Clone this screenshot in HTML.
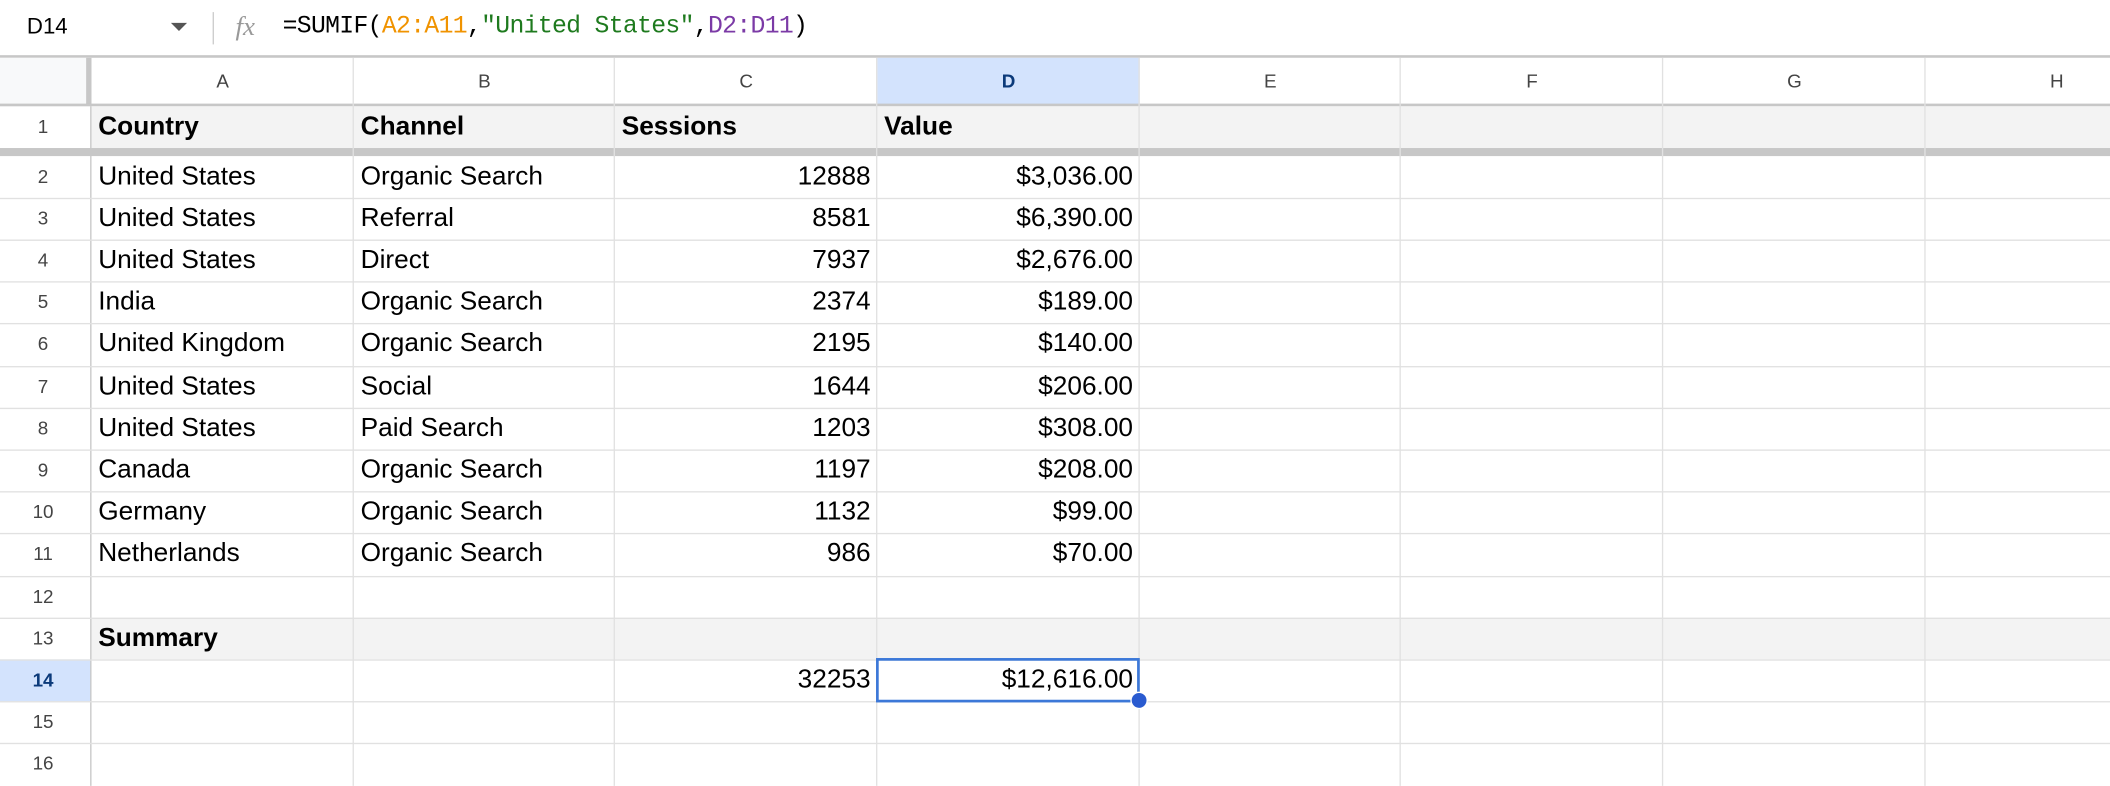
<!DOCTYPE html>
<html><head><meta charset="utf-8"><style>
html,body{margin:0;padding:0;width:2110px;height:784px;overflow:hidden;background:#fff}
#w{position:absolute;left:0;top:0;width:1568px;height:583px;transform:scale(1.34566);transform-origin:0 0;font-family:"Liberation Sans",Arial,sans-serif;color:#000}
.a{position:absolute}
.t{position:absolute;font-size:19.5px;line-height:31px;white-space:nowrap}
.r{text-align:right}
.h{position:absolute;font-size:14px;color:#444;text-align:center;line-height:36px;top:42px;height:36px}
.rn{position:absolute;left:0;width:64px;text-align:center;font-size:14px;color:#444;line-height:31px}
.vl{position:absolute;width:1px;background:#e1e1e1}
.hl{position:absolute;height:1px;background:#e1e1e1;left:0;width:1568px}
.mono{font-family:"Liberation Mono",monospace}
</style></head><body><div id="w">
<div class="a" style="left:20px;top:9px;font-size:16.5px;line-height:22px">D14</div>
<div class="a" style="left:127px;top:17px;width:0;height:0;border-left:6px solid transparent;border-right:6px solid transparent;border-top:6px solid #555"></div>
<div class="a" style="left:158px;top:9px;width:1px;height:24px;background:#ccc"></div>
<div class="a" style="left:175px;top:7px;font-family:'Liberation Serif',serif;font-style:italic;font-size:20px;color:#999;line-height:26px">fx</div>
<div class="a mono" style="left:210px;top:9px;font-size:18.4px;line-height:22px;letter-spacing:-0.5px">=SUMIF(<span style="color:#f09300">A2:A11</span>,<span style="color:#1e7a1e">"United States"</span>,<span style="color:#7b3aa6">D2:D11</span>)</div>
<div class="a" style="left:0;top:41px;width:1568px;height:2px;background:#c7c7c7"></div>
<div class="a" style="left:0;top:43px;width:1568px;height:35px;background:#fff"></div>
<div class="a" style="left:0;top:43px;width:64px;height:35px;background:#f8f9fa"></div>
<div class="a" style="left:652px;top:43px;width:195px;height:35px;background:#d3e3fd"></div>
<div class="a" style="left:64px;top:43px;width:4px;height:35px;background:#c7c7c7"></div>
<div class="h" style="left:68px;width:195px">A</div>
<div class="h" style="left:263px;width:194px">B</div>
<div class="h" style="left:457px;width:195px">C</div>
<div class="h" style="left:652px;width:195px;font-weight:bold;color:#0b3a7a">D</div>
<div class="h" style="left:847px;width:194px">E</div>
<div class="h" style="left:1041px;width:195px">F</div>
<div class="h" style="left:1236px;width:195px">G</div>
<div class="h" style="left:1431px;width:195px">H</div>
<div class="a" style="left:0;top:77px;width:1568px;height:2px;background:#c7c7c7"></div>
<div class="a" style="left:68px;top:79px;width:1500px;height:31px;background:#f3f3f3"></div>
<div class="a" style="left:0;top:110px;width:1568px;height:6px;background:#c7c7c7"></div>
<div class="a" style="left:68px;top:459px;width:1500px;height:31px;background:#f3f3f3"></div>
<div class="a" style="left:0;top:490px;width:68px;height:31px;background:#d3e3fd"></div>
<div class="vl" style="left:67px;top:79px;height:505px;background:#c7c7c7"></div>
<div class="vl" style="left:262px;top:43px;height:541px"></div>
<div class="vl" style="left:456px;top:43px;height:541px"></div>
<div class="vl" style="left:651px;top:43px;height:541px"></div>
<div class="vl" style="left:846px;top:43px;height:541px"></div>
<div class="vl" style="left:1040px;top:43px;height:541px"></div>
<div class="vl" style="left:1235px;top:43px;height:541px"></div>
<div class="vl" style="left:1430px;top:43px;height:541px"></div>
<div class="hl" style="top:147px"></div><div class="hl" style="top:178px"></div><div class="hl" style="top:209px"></div>
<div class="hl" style="top:240px"></div><div class="hl" style="top:272px"></div><div class="hl" style="top:303px"></div>
<div class="hl" style="top:334px"></div><div class="hl" style="top:365px"></div><div class="hl" style="top:396px"></div>
<div class="hl" style="top:428px"></div><div class="hl" style="top:459px"></div><div class="hl" style="top:490px"></div>
<div class="hl" style="top:521px"></div><div class="hl" style="top:552px"></div>
<div class="rn" style="top:79px">1</div>
<div class="rn" style="top:116px">2</div><div class="rn" style="top:147px">3</div><div class="rn" style="top:178px">4</div>
<div class="rn" style="top:209px">5</div><div class="rn" style="top:240px">6</div><div class="rn" style="top:272px">7</div>
<div class="rn" style="top:303px">8</div><div class="rn" style="top:334px">9</div><div class="rn" style="top:365px">10</div>
<div class="rn" style="top:396px">11</div><div class="rn" style="top:428px">12</div><div class="rn" style="top:459px">13</div>
<div class="rn" style="top:490px;font-weight:bold;color:#0b3a7a">14</div><div class="rn" style="top:521px">15</div><div class="rn" style="top:552px">16</div>
<div class="t" style="left:73px;top:79px;font-weight:bold">Country</div>
<div class="t" style="left:268px;top:79px;font-weight:bold">Channel</div>
<div class="t" style="left:462px;top:79px;font-weight:bold">Sessions</div>
<div class="t" style="left:657px;top:79px;font-weight:bold">Value</div>
<div class="t" style="left:73px;top:116px">United States</div><div class="t" style="left:268px;top:116px">Organic Search</div><div class="t r" style="right:921px;top:116px">12888</div><div class="t r" style="right:726px;top:116px">$3,036.00</div>
<div class="t" style="left:73px;top:147px">United States</div><div class="t" style="left:268px;top:147px">Referral</div><div class="t r" style="right:921px;top:147px">8581</div><div class="t r" style="right:726px;top:147px">$6,390.00</div>
<div class="t" style="left:73px;top:178px">United States</div><div class="t" style="left:268px;top:178px">Direct</div><div class="t r" style="right:921px;top:178px">7937</div><div class="t r" style="right:726px;top:178px">$2,676.00</div>
<div class="t" style="left:73px;top:209px">India</div><div class="t" style="left:268px;top:209px">Organic Search</div><div class="t r" style="right:921px;top:209px">2374</div><div class="t r" style="right:726px;top:209px">$189.00</div>
<div class="t" style="left:73px;top:240px">United Kingdom</div><div class="t" style="left:268px;top:240px">Organic Search</div><div class="t r" style="right:921px;top:240px">2195</div><div class="t r" style="right:726px;top:240px">$140.00</div>
<div class="t" style="left:73px;top:272px">United States</div><div class="t" style="left:268px;top:272px">Social</div><div class="t r" style="right:921px;top:272px">1644</div><div class="t r" style="right:726px;top:272px">$206.00</div>
<div class="t" style="left:73px;top:303px">United States</div><div class="t" style="left:268px;top:303px">Paid Search</div><div class="t r" style="right:921px;top:303px">1203</div><div class="t r" style="right:726px;top:303px">$308.00</div>
<div class="t" style="left:73px;top:334px">Canada</div><div class="t" style="left:268px;top:334px">Organic Search</div><div class="t r" style="right:921px;top:334px">1197</div><div class="t r" style="right:726px;top:334px">$208.00</div>
<div class="t" style="left:73px;top:365px">Germany</div><div class="t" style="left:268px;top:365px">Organic Search</div><div class="t r" style="right:921px;top:365px">1132</div><div class="t r" style="right:726px;top:365px">$99.00</div>
<div class="t" style="left:73px;top:396px">Netherlands</div><div class="t" style="left:268px;top:396px">Organic Search</div><div class="t r" style="right:921px;top:396px">986</div><div class="t r" style="right:726px;top:396px">$70.00</div>
<div class="t" style="left:73px;top:459px;font-weight:bold">Summary</div>
<div class="t r" style="right:921px;top:490px">32253</div>
<div class="t r" style="right:726px;top:490px">$12,616.00</div>
<div class="a" style="left:651px;top:489px;width:192px;height:29px;border:2px solid #3c78d8"></div>
<div class="a" style="left:841px;top:515px;width:11px;height:11px;border-radius:50%;background:#2a5bd0;box-shadow:0 0 0 1px #fff"></div>
</div></body></html>
